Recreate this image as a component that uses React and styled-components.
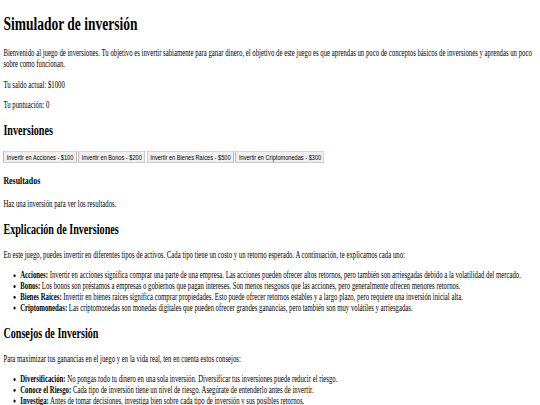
import React from "react";
import styled, { createGlobalStyle } from "styled-components";

const Global = createGlobalStyle`
  html, body { margin: 0; padding: 0; background: #fff; overflow: hidden; }
  body { width: 540px; height: 405px; }
`;

/* The reference is a 1280-wide page shown at 540x405 */
const Viewport = styled.div`
  width: 1280px;
  display: flow-root;
  transform: scale(0.421875, 0.6);
  transform-origin: 0 0;
  font-family: "Liberation Serif", "Times New Roman", serif;
  font-size: 16px;
  color: #000;
`;

const Body = styled.div`
  margin: 8px;
`;

const Title = styled.h1`
  font-size: 2em;
  font-weight: bold;
  margin: 0.67em 0;
`;

const SectionTitle = styled.h2`
  font-size: 1.5em;
  font-weight: bold;
  margin: 0.83em 0;
`;

const SubTitle = styled.h3`
  font-size: 1.17em;
  font-weight: bold;
  margin: 1em 0;
`;

const Text = styled.p`
  margin: 1em 0;
`;

const ButtonRow = styled.div``;

const InvestButton = styled.button`
  font-family: "Liberation Sans", Arial, sans-serif;
  font-size: 13.333px;
`;

const List = styled.ul`
  margin: 1em 0;
  padding-left: 40px;
  list-style: disc;
`;

const Item = styled.li``;

const investments = [
  { name: "Acciones", cost: 100 },
  { name: "Bonos", cost: 200 },
  { name: "Bienes Raíces", cost: 500 },
  { name: "Criptomonedas", cost: 300 },
];

const explanations = [
  ["Acciones:", " Invertir en acciones significa comprar una parte de una empresa. Las acciones pueden ofrecer altos retornos, pero también son arriesgadas debido a la volatilidad del mercado."],
  ["Bonos:", " Los bonos son préstamos a empresas o gobiernos que pagan intereses. Son menos riesgosos que las acciones, pero generalmente ofrecen menores retornos."],
  ["Bienes Raíces:", " Invertir en bienes raíces significa comprar propiedades. Esto puede ofrecer retornos estables y a largo plazo, pero requiere una inversión inicial alta."],
  ["Criptomonedas:", " Las criptomonedas son monedas digitales que pueden ofrecer grandes ganancias, pero también son muy volátiles y arriesgadas."],
];

const tips = [
  ["Diversificación:", " No pongas todo tu dinero en una sola inversión. Diversificar tus inversiones puede reducir el riesgo."],
  ["Conoce el Riesgo:", " Cada tipo de inversión tiene un nivel de riesgo. Asegúrate de entenderlo antes de invertir."],
  ["Investiga:", " Antes de tomar decisiones, investiga bien sobre cada tipo de inversión y sus posibles retornos."],
];

export default function App() {
  return (
    <>
      <Global />
      <Viewport>
        <Body>
          <Title>Simulador de inversión</Title>
          <Text>
            Bienvenido al juego de inversiones. Tu objetivo es invertir sabiamente para ganar dinero, el objetivo de este juego es que aprendas un poco de conceptos básicos de inversiones y aprendas un poco sobre como funcionan.
          </Text>
          <Text>Tu saldo actual: $1000</Text>
          <Text>Tu puntuación: 0</Text>

          <SectionTitle>Inversiones</SectionTitle>
          <ButtonRow>
            {investments.map((inv, i) => (
              <React.Fragment key={inv.name}>
                <InvestButton>{`Invertir en ${inv.name} - $${inv.cost}`}</InvestButton>
                {i < investments.length - 1 ? " " : null}
              </React.Fragment>
            ))}
          </ButtonRow>

          <SubTitle>Resultados</SubTitle>
          <Text>Haz una inversión para ver los resultados.</Text>

          <SectionTitle>Explicación de Inversiones</SectionTitle>
          <Text>
            En este juego, puedes invertir en diferentes tipos de activos. Cada tipo tiene un costo y un retorno esperado. A continuación, te explicamos cada uno:
          </Text>
          <List>
            {explanations.map(([k, v]) => (
              <Item key={k}>
                <strong>{k}</strong>
                {v}
              </Item>
            ))}
          </List>

          <SectionTitle>Consejos de Inversión</SectionTitle>
          <Text>
            Para maximizar tus ganancias en el juego y en la vida real, ten en cuenta estos consejos:
          </Text>
          <List>
            {tips.map(([k, v]) => (
              <Item key={k}>
                <strong>{k}</strong>
                {v}
              </Item>
            ))}
          </List>
        </Body>
      </Viewport>
    </>
  );
}
